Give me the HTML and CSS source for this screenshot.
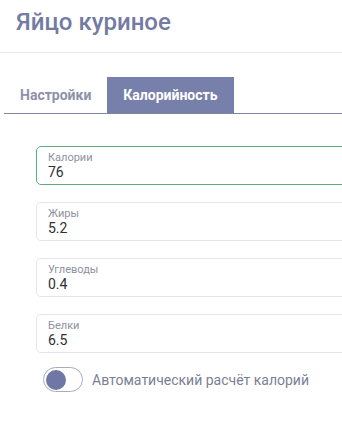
FILE: index.html
```html
<!DOCTYPE html>
<html>
<head>
	<meta charset="utf-8">
	<title>Яйцо куриное</title>
	<link rel="stylesheet" href="styles.css">
</head>
<body>
	<div class="header">
		<h1 class="title">Яйцо куриное</h1>
	</div>
	<div class="tabs">
		<a class="tab" href="#">Настройки</a>
		<a class="tab active" href="#">Калорийность</a>
	</div>
	<div class="fields">
		<label class="field focused">
			<span class="field-label">Калории</span>
			<input class="field-input" type="text" value="76">
		</label>
		<label class="field">
			<span class="field-label">Жиры</span>
			<input class="field-input" type="text" value="5.2">
		</label>
		<label class="field">
			<span class="field-label">Углеводы</span>
			<input class="field-input" type="text" value="0.4">
		</label>
		<label class="field">
			<span class="field-label">Белки</span>
			<input class="field-input" type="text" value="6.5">
		</label>
		<label class="switch">
			<span class="switch-track"><span class="switch-knob"></span></span>
			<span class="switch-text">Автоматический расчёт калорий</span>
		</label>
	</div>
</body>
</html>
```

FILE: styles.css
```css
html, body{
	margin: 0;
	padding: 0;
	overflow: hidden;
	background: #fff;
}
body{
	font-family: Roboto, "Liberation Sans", sans-serif;
	width: 342px;
}
.header{
	padding: 8px 16px 16px;
	border-bottom: 1px solid #e6e8ef;
}
.title{
	margin: 0;
	font-size: 24px;
	line-height: 28px;
	font-weight: 500;
	color: #737ba3;
}
.tabs{
	display: flex;
	margin: 24px 0 0 4px;
	border-bottom: 1px solid #7d849f;
}
.tab{
	display: block;
	height: 36px;
	line-height: 36px;
	padding: 0 16px;
	font-size: 14px;
	font-weight: 700;
	color: #8d92ab;
	text-decoration: none;
}
.tab.active{
	background-color: #7780aa;
	color: #fff;
}
.fields{
	display: flex;
	flex-direction: column;
	gap: 17px;
	padding: 32px 0 0 36px;
	overflow: hidden;
}
.field{
	display: flex;
	flex-direction: column;
	flex-shrink: 0;
	box-sizing: border-box;
	width: 330px;
	height: 39px;
	padding: 4px 11px 0;
	border: 1px solid #e3e6ec;
	border-radius: 5px;
}
.field.focused{
	border-color: #5cae7f;
}
.field-label{
	font-size: 11px;
	line-height: 13px;
	color: #8e91a0;
}
.field-input{
	border: none;
	outline: none;
	padding: 0;
	margin: 0;
	font-family: inherit;
	font-size: 14px;
	line-height: 17px;
	color: #2f3034;
	background: transparent;
}
.switch{
	display: flex;
	align-items: center;
	gap: 9px;
	margin: -3px 0 0 7px;
}
.switch-track{
	display: flex;
	align-items: center;
	box-sizing: border-box;
	width: 40px;
	height: 25px;
	padding: 0 2px;
	border: 1px solid #a7abbf;
	border-radius: 13px;
}
.switch-knob{
	width: 20px;
	height: 20px;
	border-radius: 50%;
	background-color: #6e77a6;
}
.switch-text{
	font-size: 14px;
	color: #7b7f95;
}
```
